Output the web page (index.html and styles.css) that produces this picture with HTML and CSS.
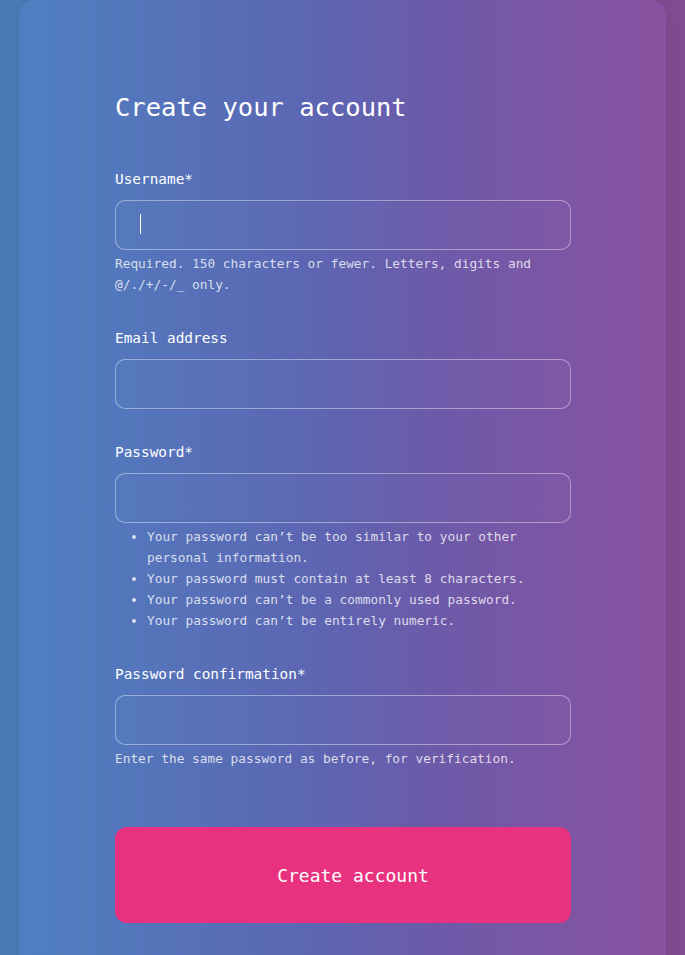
FILE: index.html
```html
<!DOCTYPE html>
<html lang="en">
<head>
<meta charset="utf-8">
<title>Create your account</title>
<link rel="stylesheet" href="styles.css">
</head>
<body>
<main class="card">
  <h1 class="title">Create your account</h1>
  <form class="form">
    <div class="field">
      <label class="label" for="id_username">Username*</label>
      <div class="input-wrap">
        <input class="input" id="id_username" type="text">
        <span class="caret"></span>
      </div>
      <p class="help">Required. 150 characters or fewer. Letters, digits and @/./+/-/_ only.</p>
    </div>
    <div class="field">
      <label class="label" for="id_email">Email address</label>
      <input class="input" id="id_email" type="email">
    </div>
    <div class="field">
      <label class="label" for="id_password1">Password*</label>
      <input class="input" id="id_password1" type="password">
      <ul class="help-list">
        <li>Your password can’t be too similar to your other personal information.</li>
        <li>Your password must contain at least 8 characters.</li>
        <li>Your password can’t be a commonly used password.</li>
        <li>Your password can’t be entirely numeric.</li>
      </ul>
    </div>
    <div class="field">
      <label class="label" for="id_password2">Password confirmation*</label>
      <input class="input" id="id_password2" type="password">
      <p class="help">Enter the same password as before, for verification.</p>
    </div>
    <button class="submit" type="button">Create account</button>
  </form>
</main>
</body>
</html>
```
FILE: styles.css
```css
html, body {
  margin: 0;
  padding: 0;
}

body {
  min-height: 955px;
  background: linear-gradient(90deg, #4a7bb6 0%, #5a62ab 50%, #824b90 100%);
  font-family: "DejaVu Sans Mono", "Liberation Mono", monospace;
  color: #ffffff;
  overflow: hidden;
}

.card {
  margin: 0 19px;
  min-height: 1000px;
  box-sizing: border-box;
  padding: 92px 95px 0 96px;
  background: linear-gradient(90deg, #4f80c1 0%, #5c66b3 45%, #6d5aa9 65%, #8a52a0 100%);
  border-radius: 16px 16px 0 0;
  box-shadow: 0 0 18px rgba(0, 0, 0, 0.06);
}

.title {
  margin: 0 0 46px 0;
  font-size: 25.5px;
  line-height: 31px;
  font-weight: normal;
}

.form {
  display: flex;
  flex-direction: column;
}

.field {
  display: flex;
  flex-direction: column;
  margin-bottom: 33px;
}

.label {
  display: block;
  font-size: 14.4px;
  line-height: 21px;
  margin-bottom: 10px;
  color: #ffffff;
}

.input-wrap {
  position: relative;
}

.input {
  display: block;
  width: 100%;
  height: 50px;
  box-sizing: border-box;
  padding: 0 24px;
  border: 1px solid rgba(255, 255, 255, 0.4);
  border-radius: 10px;
  background: rgba(255, 255, 255, 0.015);
  color: #ffffff;
  font-family: inherit;
  font-size: 14px;
  outline: none;
}

.caret {
  position: absolute;
  left: 25px;
  top: 14px;
  width: 1px;
  height: 20px;
  background: #ffffff;
}

.help {
  margin: 3px 0 0 0;
  font-size: 12.8px;
  line-height: 21px;
  color: rgba(255, 255, 255, 0.78);
}

.help-list {
  margin: 3px 0 0 0;
  padding-left: 32px;
  font-size: 12.8px;
  line-height: 21px;
  color: rgba(255, 255, 255, 0.78);
}

.submit {
  margin-top: 25px;
  height: 96px;
  width: 100%;
  border: none;
  border-radius: 12px;
  background: #e8327f;
  color: #ffffff;
  font-family: inherit;
  font-size: 18px;
  padding: 0 0 0 20px;
  cursor: pointer;
}
```
